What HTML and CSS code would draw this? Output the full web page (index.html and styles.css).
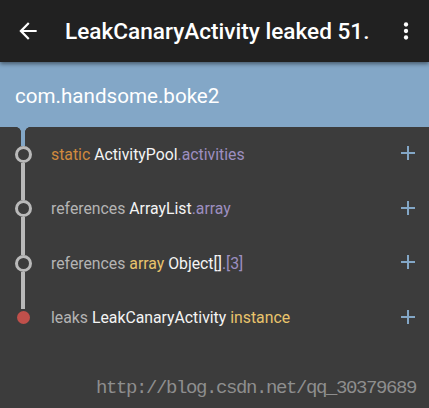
FILE: index.html
```html
<!DOCTYPE html>
<html>
<head>
<meta charset="utf-8">
<link rel="stylesheet" href="styles.css">
</head>
<body>
<div class="screen">
  <div class="toolbar">
    <svg class="icon back" viewBox="0 0 24 24" width="26" height="26"><path fill="#fff" d="M20 11H7.83l5.59-5.59L12 4l-8 8 8 8 1.41-1.41L7.83 13H20v-2z"/></svg>
    <div class="title">LeakCanaryActivity leaked 51.</div>
    <svg class="icon menu" viewBox="0 0 24 24" width="26" height="26"><circle cx="12" cy="6" r="2" fill="#fff"/><circle cx="12" cy="12" r="2" fill="#fff"/><circle cx="12" cy="18" r="2" fill="#fff"/></svg>
  </div>
  <div class="header">com.handsome.boke2</div>
  <div class="list">
    <div class="row">
      <div class="rail"><span class="seg seg-top first"><span class="flare"></span></span><span class="node"></span><span class="seg"></span></div>
      <div class="text"><span class="kw">static</span> <span class="cls">ActivityPool</span><span class="fld">.activities</span></div>
      <span class="plus"></span>
    </div>
    <div class="row">
      <div class="rail"><span class="seg seg-top"></span><span class="node"></span><span class="seg"></span></div>
      <div class="text"><span class="ref">references</span> <span class="cls">ArrayList</span><span class="fld">.array</span></div>
      <span class="plus"></span>
    </div>
    <div class="row">
      <div class="rail"><span class="seg seg-top"></span><span class="node"></span><span class="seg"></span></div>
      <div class="text"><span class="ref">references</span> <span class="hl">array</span> <span class="cls">Object[]</span><span class="fld">.[3]</span></div>
      <span class="plus"></span>
    </div>
    <div class="row">
      <div class="rail"><span class="seg seg-top"></span><span class="node leak"></span><span class="seg none"></span></div>
      <div class="text"><span class="ref">leaks</span> <span class="cls">LeakCanaryActivity</span> <span class="hl">instance</span></div>
      <span class="plus"></span>
    </div>
  </div>
  <div class="watermark">http://blog.csdn.net/qq_30379689</div>
</div>
</body>
</html>
```

FILE: styles.css
```css
* { box-sizing: border-box; }
html, body { margin: 0; padding: 0; }
body {
  background: #3c3c3c;
  font-family: Roboto, "Noto Sans", sans-serif;
}
.screen {
  position: relative;
  width: 429px;
  height: 408px;
  overflow: hidden;
  background: #3c3c3c;
}
.toolbar {
  position: relative;
  z-index: 2;
  height: 62px;
  background: #212121;
  display: flex;
  align-items: center;
  padding: 0 10px 0 15px;
  box-shadow: 0 2px 4px rgba(0,0,0,0.45);
}
.icon { display: block; flex: none; }
.title {
  flex: 1;
  margin-left: 24px;
  color: #fff;
  font-size: 22.6px;
  font-weight: 500;
  white-space: nowrap;
  overflow: hidden;
}
.header {
  height: 65px;
  background: #83a7c7;
  color: #fff;
  font-size: 20.6px;
  display: flex;
  align-items: center;
  padding-left: 15px;
  padding-top: 2px;
}
.list {
  display: flex;
  flex-direction: column;
}
.row {
  height: 54.5px;
  display: flex;
  align-items: center;
}
.rail {
  width: 46px;
  height: 100%;
  display: flex;
  flex-direction: column;
  align-items: center;
  flex: none;
}
.seg {
  width: 4px;
  flex: 1;
  background: #b9b9b9;
  position: relative;
}
.seg.first { background: #83a7c7; }
.seg.none { background: transparent; }
.flare {
  position: absolute;
  top: 0;
  left: -5px;
  width: 14px;
  height: 5px;
  background:
    radial-gradient(circle at 0 100%, #3c3c3c 4.6px, transparent 5.2px) left top / 5px 5px no-repeat,
    radial-gradient(circle at 100% 100%, #3c3c3c 4.6px, transparent 5.2px) right top / 5px 5px no-repeat,
    #83a7c7;
}
.node {
  width: 17px;
  height: 17px;
  border-radius: 50%;
  border: 3px solid #b9b9b9;
  background: #3c3c3c;
  flex: none;
}
.node.leak {
  width: 13px;
  height: 13px;
  border: none;
  background: #c0504b;
  margin: 2px 0;
}
.text {
  flex: 1;
  margin-left: 5px;
  font-size: 15.8px;
  color: #f2f2f2;
  white-space: nowrap;
}
.kw { color: #d08a3e; }
.cls { color: #f4f4f4; }
.fld { color: #9d8fc0; }
.ref { color: #b4b4b4; }
.hl { color: #e9c46c; }
.plus {
  flex: none;
  width: 14px;
  height: 14px;
  margin-right: 14px;
  margin-top: -2px;
  background:
    linear-gradient(#83a7c7, #83a7c7) center / 14px 2px no-repeat,
    linear-gradient(#83a7c7, #83a7c7) center / 2px 14px no-repeat;
}
.watermark {
  position: absolute;
  right: 13px;
  bottom: 9px;
  font-family: "Liberation Mono", monospace;
  font-size: 19px;
  letter-spacing: -1.4px;
  color: #8e8e8e;
  white-space: nowrap;
}
```
